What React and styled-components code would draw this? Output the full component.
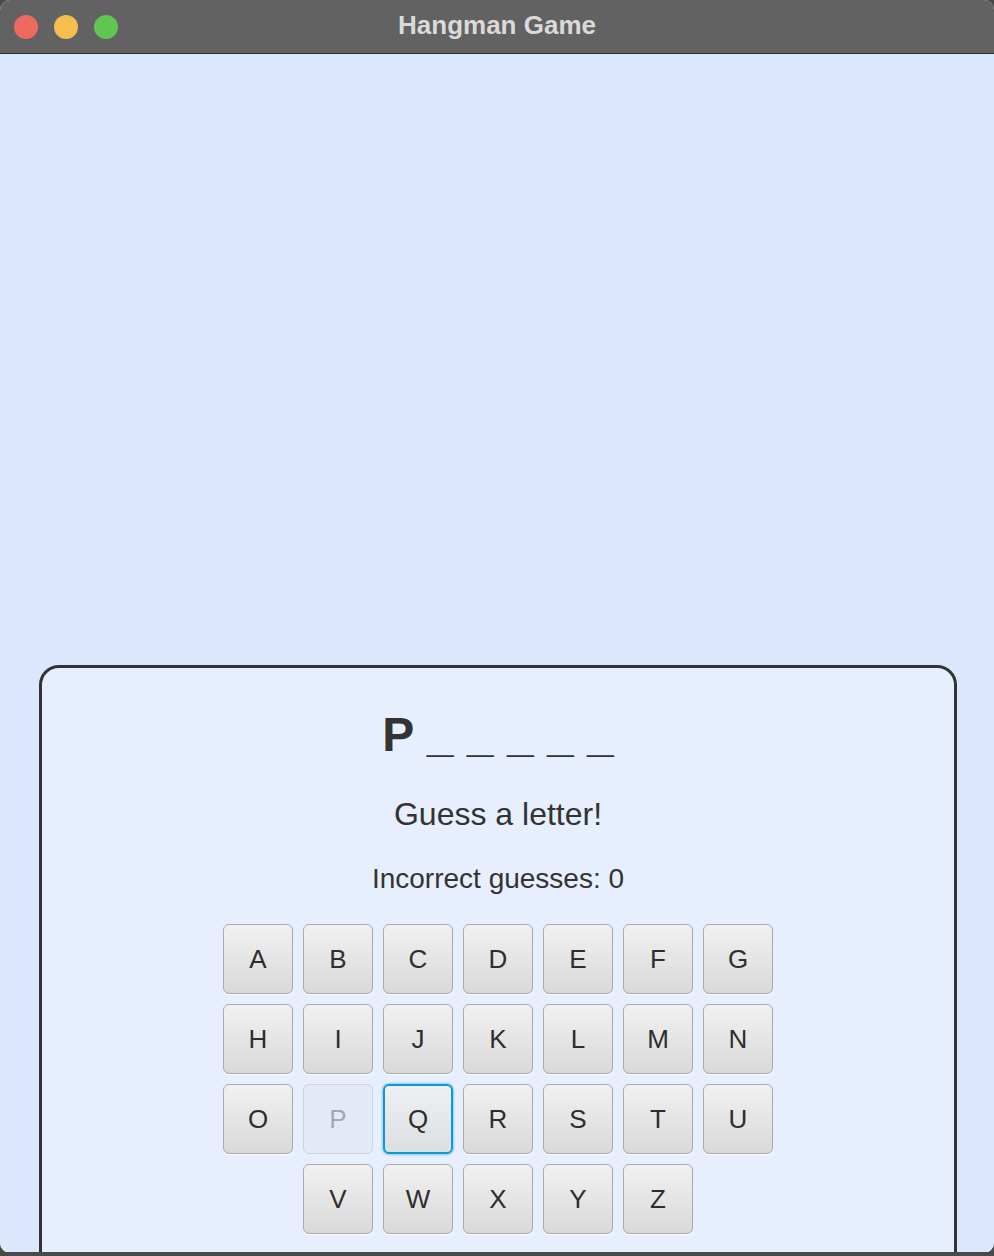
import React from "react";
import styled, { createGlobalStyle, css } from "styled-components";

const GlobalStyle = createGlobalStyle`
  html, body {
    margin: 0;
    padding: 0;
    background: #4a4a4a;
  }
  body {
    font-family: "Liberation Sans", Arial, Helvetica, sans-serif;
  }
`;

const Window = styled.div`
  width: 994px;
  height: 1252px;
  border-radius: 10px;
  overflow: hidden;
  display: flex;
  flex-direction: column;
  background: #dae7fd;
  box-sizing: border-box;
  box-shadow: 0 1px 0 #f2f2f2;
`;

const TitleBar = styled.div`
  flex: none;
  height: 53px;
  border-bottom: 1px solid #2e2e2e;
  background: #626262;
  display: grid;
  grid-template-columns: 1fr auto 1fr;
  align-items: center;
`;

const Lights = styled.div`
  display: flex;
  gap: 16px;
  padding-left: 14px;
`;

const Light = styled.span`
  width: 24px;
  height: 24px;
  border-radius: 50%;
  background: ${(p) => p.$color};
`;

const Title = styled.div`
  color: #dadada;
  font-weight: 700;
  font-size: 26px;
  margin-top: -2px;
`;

const Content = styled.div`
  flex: 1;
  display: flex;
  flex-direction: column;
  padding: 0 37px 0 39px;
  min-height: 0;
`;

const GallowsArea = styled.div`
  flex: none;
  height: 611px;
`;

const Panel = styled.div`
  flex: none;
  min-height: 700px;
  border: 3px solid #333333;
  border-radius: 20px;
  background: #e7effe;
  padding-top: 39px;
  display: flex;
  flex-direction: column;
  align-items: center;
  color: #333333;
`;

const Word = styled.div`
  font-size: 48px;
  font-weight: 700;
  line-height: 56px;
  white-space: pre;
`;

const Message = styled.div`
  margin-top: 31px;
  font-size: 32px;
  line-height: 40px;
`;

const Count = styled.div`
  margin-top: 29px;
  font-size: 28px;
  line-height: 32px;
`;

const Keyboard = styled.div`
  margin-top: 29px;
  display: flex;
  flex-direction: column;
  align-items: center;
  gap: 10px;
`;

const KeyRow = styled.div`
  display: flex;
  gap: 10px;
  justify-content: center;
`;

const Key = styled.button`
  width: 70px;
  height: 70px;
  box-sizing: border-box;
  padding: 0;
  border: 1.5px solid #aaaaaa;
  border-radius: 6px;
  background: linear-gradient(#f1f1f1, #d9d9d9);
  box-shadow: 0 1px 0 #ffffff;
  font-family: "Liberation Sans", Arial, Helvetica, sans-serif;
  font-size: 26px;
  color: #2e2e2e;
  display: flex;
  align-items: center;
  justify-content: center;
  outline: none;

  ${(p) =>
    p.$disabled &&
    css`
      background: #e4eaf5;
      border-color: #cdd4df;
      color: #a2a9b4;
      box-shadow: none;
    `}

  ${(p) =>
    p.$focused &&
    css`
      border: 2px solid #0a98d6;
      background: linear-gradient(#eef0f2, #dcdfe2);
      box-shadow: 0 0 0 1.5px #a9d8f0;
    `}
`;

const rows = [
  ["A", "B", "C", "D", "E", "F", "G"],
  ["H", "I", "J", "K", "L", "M", "N"],
  ["O", "P", "Q", "R", "S", "T", "U"],
  ["V", "W", "X", "Y", "Z"],
];

export default function App() {
  return (
    <>
      <GlobalStyle />
      <Window>
        <TitleBar>
          <Lights>
            <Light $color="#ed6a5e" />
            <Light $color="#f5bf4f" />
            <Light $color="#61c554" />
          </Lights>
          <Title>Hangman Game</Title>
          <div />
        </TitleBar>
        <Content>
          <GallowsArea />
          <Panel>
            <Word>P _ _ _ _ _</Word>
            <Message>Guess a letter!</Message>
            <Count>Incorrect guesses: 0</Count>
            <Keyboard>
              {rows.map((row, i) => (
                <KeyRow key={i}>
                  {row.map((l) => (
                    <Key key={l} $disabled={l === "P"} $focused={l === "Q"}>
                      {l}
                    </Key>
                  ))}
                </KeyRow>
              ))}
            </Keyboard>
          </Panel>
        </Content>
      </Window>
    </>
  );
}
